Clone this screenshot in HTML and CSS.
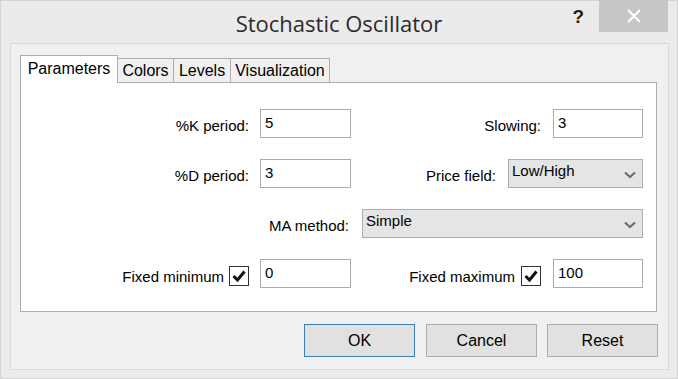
FILE: index.html
```html
<!DOCTYPE html>
<html>
<head>
<meta charset="utf-8">
<link rel="stylesheet" href="styles.css">
</head>
<body>
<div class="window">
  <div class="titlebar">
    <div></div>
    <div class="title">Stochastic Oscillator</div>
    <div class="controls">
      <span class="help">?</span>
      <span class="close">
        <svg width="14" height="14" viewBox="0 0 14 14"><path d="M1 1 L13 13 M13 1 L1 13" stroke="#fff" stroke-width="2" fill="none"/></svg>
      </span>
    </div>
  </div>
  <div class="frame">
    <div class="tabs">
      <div class="tab active">Parameters</div>
      <div class="tab t-colors">Colors</div>
      <div class="tab t-levels">Levels</div>
      <div class="tab t-vis">Visualization</div>
    </div>
    <div class="panel">
      <div class="cell left">
        <span class="label">%K period:</span>
        <div class="field">5</div>
      </div>
      <div class="cell right">
        <span class="label">Slowing:</span>
        <div class="field narrow">3</div>
      </div>
      <div class="cell left">
        <span class="label">%D period:</span>
        <div class="field">3</div>
      </div>
      <div class="cell right wide-gap">
        <span class="label">Price field:</span>
        <div class="select price">
          <span>Low/High</span>
          <svg class="chev" width="12" height="8" viewBox="0 0 12 8"><path d="M1 1.5 L6 6 L11 1.5" stroke="#6e6e6e" stroke-width="2.2" fill="none"/></svg>
        </div>
      </div>
      <div class="cell full">
        <span class="label">MA method:</span>
        <div class="select ma">
          <span>Simple</span>
          <svg class="chev" width="12" height="8" viewBox="0 0 12 8"><path d="M1 1.5 L6 6 L11 1.5" stroke="#6e6e6e" stroke-width="2.2" fill="none"/></svg>
        </div>
      </div>
      <div class="cell left">
        <span class="label chk-label">Fixed minimum</span>
        <span class="check"><svg width="18" height="18" viewBox="0 0 18 18"><path d="M3.5 9 L7.5 13 L14.5 4.5" stroke="#111" stroke-width="3" fill="none"/></svg></span>
        <div class="field">0</div>
      </div>
      <div class="cell right">
        <span class="label chk-label">Fixed maximum</span>
        <span class="check"><svg width="18" height="18" viewBox="0 0 18 18"><path d="M3.5 9 L7.5 13 L14.5 4.5" stroke="#111" stroke-width="3" fill="none"/></svg></span>
        <div class="field narrow">100</div>
      </div>
    </div>
    <div class="buttons">
      <div class="btn default">OK</div>
      <div class="btn">Cancel</div>
      <div class="btn">Reset</div>
    </div>
  </div>
</div>
</body>
</html>
```
FILE: styles.css
```css
* { box-sizing: border-box; }
html, body { margin: 0; padding: 0; }
body { background: #ffffff; font-family: "Liberation Sans", Arial, sans-serif; }

.window {
  width: 678px;
  height: 379px;
  border: 1px solid #d4d4d4;
  background: #ebebeb;
  display: flex;
  flex-direction: column;
}

.titlebar {
  height: 42px;
  display: grid;
  grid-template-columns: 1fr auto 1fr;
}
.title {
  font-family: "Open Sans", "Noto Sans", sans-serif;
  font-size: 22px;
  line-height: 30px;
  color: #2b2b2b;
  padding-top: 7px;
}
.controls {
  display: flex;
  justify-content: flex-end;
  align-items: flex-start;
  margin-top: -1px;
  margin-right: 9px;
}
.help {
  font-family: "Liberation Sans", Arial, sans-serif;
  font-weight: bold;
  font-size: 19px;
  color: #1e1e1e;
  margin-top: 6px;
  margin-right: 15px;
}
.close {
  width: 69px;
  height: 32px;
  background: #c6c6c6;
  display: flex;
  align-items: center;
  justify-content: center;
}

.frame {
  margin: 0 8px 0 9px;
  height: 327px;
  border: 1px solid #d9d9d9;
  background: #f0f0f0;
  padding: 11px 11px 0 9px;
  display: flex;
  flex-direction: column;
}

.tabs {
  display: flex;
  align-items: flex-end;
  height: 27px;
}
.tab {
  height: 24px;
  border: 1px solid #adadad;
  border-bottom: none;
  background: #f0f0f0;
  font-size: 16px;
  color: #000;
  display: flex;
  justify-content: center;
  padding-top: 3px;
  margin-left: -1px;
}
.tab.active {
  position: relative;
  height: 28px;
  margin-bottom: -1px;
  margin-left: 0;
  background: #ffffff;
  width: 98px;
  padding-top: 4px;
}
.t-colors { width: 57px; }
.t-levels { width: 58px; }
.t-vis { width: 100px; }

.panel {
  height: 230px;
  border: 1px solid #adadad;
  background: #ffffff;
  display: grid;
  grid-template-columns: 330px 1fr;
  grid-auto-rows: 29px;
  row-gap: 21px;
  padding: 26px 13px 0 0;
}

.cell {
  display: flex;
  justify-content: flex-end;
  align-items: center;
  font-size: 15px;
  color: #000;
}
.cell.left { gap: 11px; }
.cell.right { gap: 12px; }
.cell.full { grid-column: 1 / 3; gap: 13px; }
.label { line-height: 17px; padding-top: 3px; }
.chk-label { padding-top: 5px; }

.field {
  width: 91px;
  height: 29px;
  border: 1px solid #ababab;
  background: #fff;
  padding: 4px 4px 0;
  line-height: 17px;
  font-size: 15px;
}
.field.narrow { width: 90px; }

.select {
  height: 29px;
  border: 1px solid #adadad;
  background: #e5e5e5;
  padding: 2px 6px 0 3px;
  display: flex;
  justify-content: space-between;
  align-items: flex-start;
  line-height: 17px;
  font-size: 15px;
}
.select .chev { margin-top: 9px; }
.select.price { width: 135px; }
.select.ma { width: 281px; }

.check {
  width: 20px;
  height: 20px;
  border: 1px solid #333;
  background: #fff;
  display: flex;
  align-items: center;
  justify-content: center;
  margin-left: -6px;
  margin-top: 5px;
}

.buttons {
  margin-top: 12px;
  margin-right: -1px;
  display: flex;
  justify-content: flex-end;
  gap: 11px;
}
.btn {
  width: 111px;
  height: 33px;
  border: 1px solid #adadad;
  background: #e1e1e1;
  font-size: 16px;
  color: #000;
  display: flex;
  align-items: center;
  justify-content: center;
}
.btn.default { border-color: #3c7fb1; }
.btn + .btn + .btn { margin-left: -1px; }
```
